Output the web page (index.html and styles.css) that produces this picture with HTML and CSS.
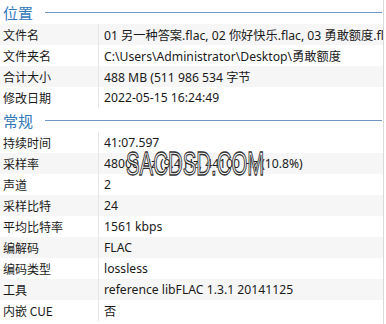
FILE: index.html
```html
<!DOCTYPE html>
<html>
<head>
<meta charset="utf-8">
<link rel="stylesheet" href="styles.css">
</head>
<body>
<div class="panel">
  <div class="section-head"><span class="section-title">位置</span><span class="section-line"></span></div>
  <div class="row alt"><div class="label">文件名</div><div class="value">01 另一种答案.flac, 02 你好快乐.flac, 03 勇敢额度.flac</div></div>
  <div class="row"><div class="label">文件夹名</div><div class="value">C:\Users\Administrator\Desktop\勇敢额度</div></div>
  <div class="row alt"><div class="label">合计大小</div><div class="value">488 MB (511 986 534 字节</div></div>
  <div class="row"><div class="label">修改日期</div><div class="value">2022-05-15 16:24:49</div></div>
  <div class="section-head"><span class="section-title">常规</span><span class="section-line"></span></div>
  <div class="row"><div class="label">持续时间</div><div class="value">41:07.597</div></div>
  <div class="row alt wm-row"><div class="label">采样率</div><div class="value">48000 Hz (9.4 Hz, 44100 Hz (10.8%)</div><div class="watermark">SACDSD.COM</div></div>
  <div class="row"><div class="label">声道</div><div class="value">2</div></div>
  <div class="row alt"><div class="label">采样比特</div><div class="value">24</div></div>
  <div class="row"><div class="label">平均比特率</div><div class="value">1561 kbps</div></div>
  <div class="row alt"><div class="label">编解码</div><div class="value">FLAC</div></div>
  <div class="row"><div class="label">编码类型</div><div class="value">lossless</div></div>
  <div class="row alt"><div class="label">工具</div><div class="value">reference libFLAC 1.3.1 20141125</div></div>
  <div class="row"><div class="label">内嵌 CUE</div><div class="value">否</div></div>
</div>
</body>
</html>
```

FILE: styles.css
```css
html, body {
  margin: 0;
  padding: 0;
  background: #ffffff;
}
body {
  width: 386px;
  height: 324px;
  overflow: hidden;
  font-family: "Noto Sans", "Noto Sans CJK SC", sans-serif;
  font-size: 12px;
  color: #1a1a1a;
}
.panel {
  width: 384px;
  border-right: 1px solid #d9d9d9;
  height: 324px;
  box-sizing: border-box;
}
.section-head {
  height: 24px;
  display: flex;
  align-items: center;
  padding-left: 3px;
  gap: 12px;
}
.section-title {
  font-family: "Noto Sans CJK SC", sans-serif;
  font-size: 15px;
  color: #3377bb;
  line-height: 1;
}
.section-line {
  flex: 1;
  height: 1px;
  background: #6d97c2;
  margin-right: 1px;
}
.row {
  height: 21px;
  display: flex;
  align-items: center;
  position: relative;
}
.row.alt {
  background: #f6f6f6;
}
.label {
  width: 95px;
  padding-left: 3px;
  height: 100%;
  display: flex;
  align-items: center;
  border-right: 1px solid #e6e6e6;
  font-family: "Noto Sans CJK SC", sans-serif;
  font-size: 12px;
  white-space: nowrap;
}
.value {
  padding-left: 5px;
  flex: 1;
  white-space: nowrap;
  overflow: hidden;
  font-family: "Noto Sans", "Noto Sans CJK SC", sans-serif;
  font-size: 12.2px;
}
.watermark {
  position: absolute;
  left: 126px;
  top: -7px;
  font-family: "Liberation Sans", sans-serif;
  font-size: 34px;
  line-height: 1;
  color: rgba(255, 255, 255, 0.88);
  -webkit-text-stroke: 1.3px #333;
  transform: scaleX(0.6);
  transform-origin: left top;
  white-space: nowrap;
}
```
